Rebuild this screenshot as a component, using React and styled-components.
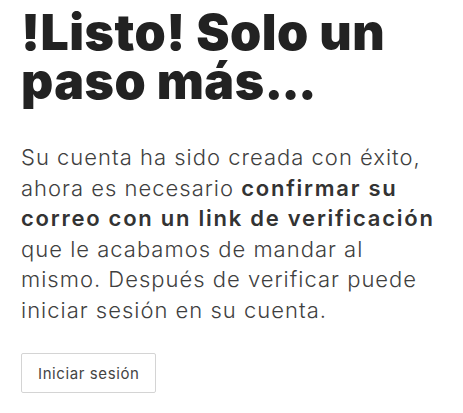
import styled, { createGlobalStyle } from "styled-components";

const GlobalStyle = createGlobalStyle`
  body {
    margin: 0;
    background: #ffffff;
    font-family: Inter, "Open Sans", sans-serif;
  }
`;

const Page = styled.main`
  display: flex;
  flex-direction: column;
  align-items: flex-start;
  padding: 8px 21px 0;
`;

const Title = styled.h1`
  margin: 0;
  font-family: Inter, sans-serif;
  font-weight: 900;
  font-size: 50px;
  line-height: 49px;
  letter-spacing: 0.5px;
  color: #222222;
`;

const Dots = styled.span`
  letter-spacing: -2px;
`;

const Message = styled.p`
  margin: 36px 0 0;
  font-family: Inter, sans-serif;
  font-weight: 300;
  font-size: 22px;
  line-height: 30.5px;
  letter-spacing: 1px;
  color: #3f3f3f;

  strong {
    font-weight: 600;
    letter-spacing: 1.75px;
    color: #333333;
  }
`;

const LoginButton = styled.button`
  margin-top: 28px;
  height: 40px;
  padding: 0 16px;
  border: 1px solid #d4d4d4;
  border-radius: 2px;
  background: #ffffff;
  font-family: Inter, sans-serif;
  font-size: 15px;
  letter-spacing: 0.6px;
  color: #444444;
  cursor: pointer;
`;

function App() {
  return (
    <>
      <GlobalStyle />
      <Page>
        <Title>
          !Listo! Solo un
          <br />
          paso más<Dots>...</Dots>
        </Title>
        <Message>
          Su cuenta ha sido creada con éxito,
          <br />
          ahora es necesario <strong>confirmar su</strong>
          <br />
          <strong>correo con un link de verificación</strong>
          <br />
          que le acabamos de mandar al
          <br />
          mismo. Después de verificar puede
          <br />
          iniciar sesión en su cuenta.
        </Message>
        <LoginButton type="button">Iniciar sesión</LoginButton>
      </Page>
    </>
  );
}

export default App;
